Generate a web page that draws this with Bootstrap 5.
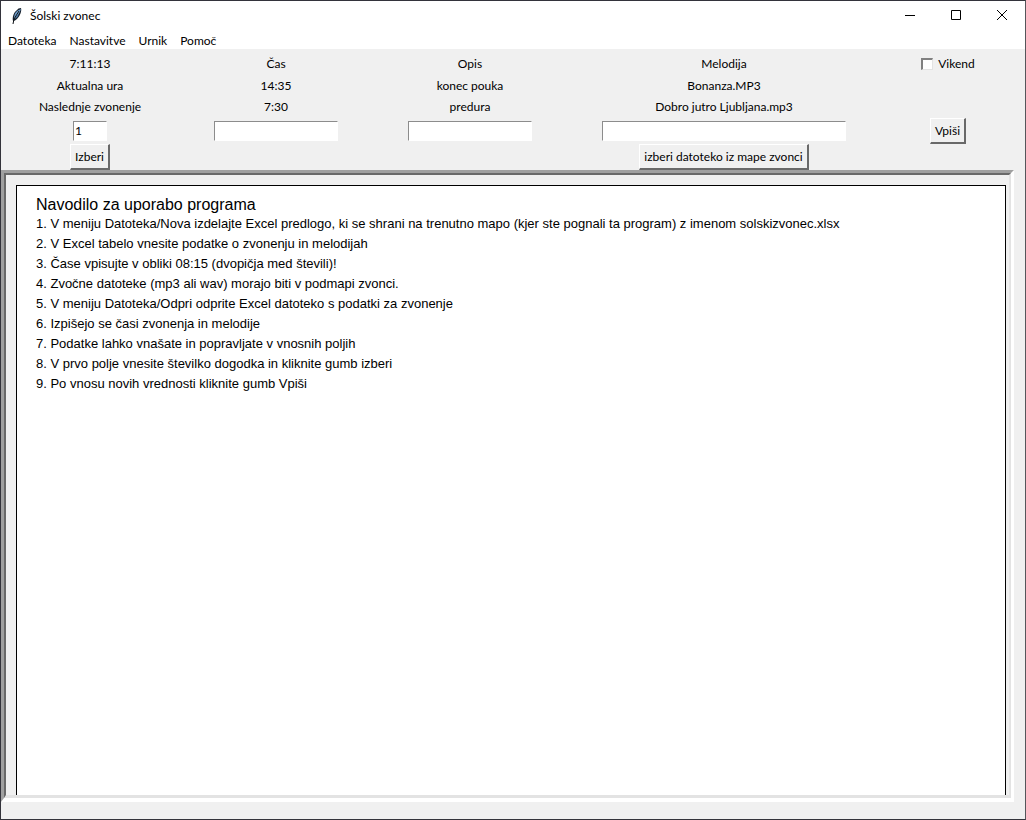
<!DOCTYPE html>
<html lang="sl">
<head>
<meta charset="utf-8">
<meta name="viewport" content="width=device-width, initial-scale=1">
<title>Šolski zvonec</title>
<link href="https://cdn.jsdelivr.net/npm/bootstrap@5.3.0/dist/css/bootstrap.min.css" rel="stylesheet">
<style>
  body { font: 12px/16px Lato, "Noto Sans", sans-serif; color: #000; background: #f0f0f0; }
  .app-window { border: 1px solid #33333b; border-right-color: #56565a; }
  .title-bar { height: 30px; }
  .app-name { padding-left: 7px; }
  .caption-btn { width: 46px; height: 29px; padding: 0; border: 0; background: none; display: flex; align-items: center; justify-content: center; }
  .menu-bar { height: 18px; gap: 13px; padding: 2px 0 0 7px; }
  .menu-bar a { color: #000; text-decoration: none; }
  .bell-form { display: grid; grid-template-columns: 178fr 194fr 194fr 314fr 134fr; grid-template-rows: 28px 18px 23px 26px 26px; justify-items: center; align-items: center; padding-right: 10px; }
  .bell-form > .head-cell { padding-top: 2px; }
  .col-1st { grid-column: 1; }
  .col-4th { grid-column: 4; }
  .field { height: 20px; padding: 0 1px 2px; border: 1px solid #fff; border-top-color: #8c8c8c; border-left-color: #8c8c8c; border-radius: 0; background: #fff; width: 124px; outline: 0; }
  .field-num { width: 34px; }
  .field-wide { width: 244px; }
  .raised { height: 26px; padding: 0 4px; border: 1px solid #fff; border-right: 2px solid #696969; border-bottom: 2px solid #696969; background: #f0f0f0; color: #000; white-space: nowrap; }
  .tick { appearance: none; width: 12px; height: 12px; margin: 0 1px 0 0; background: #fff; border: 1px solid #e3e3e3; border-top: 2px solid #808080; border-left: 2px solid #808080; }
  .sunken { border: solid; border-width: 3px 3px 4px 3px; border-color: #a0a0a0 #fff #fff #a0a0a0; margin: 0 11px 17px 0; }
  .sunken-inner { border: solid; border-width: 2px 2px 3px 2px; border-color: #696969 #e3e3e3 #e3e3e3 #696969; padding: 10px 3px 0 10px; }
  .sheet { background: #fff; border: 1px solid #000; border-bottom: 0; padding: 9px 19px; font-family: "Liberation Sans", Arial, sans-serif; font-size: 13px; line-height: 20px; }
  .sheet h1 { font-size: 16px; line-height: 19px; font-weight: 400; margin: 0; }
  .sheet ol { padding: 0; margin: 0; }
</style>
<script src="https://cdn.jsdelivr.net/npm/bootstrap@5.3.0/dist/js/bootstrap.bundle.min.js"></script>
</head>
<body>
<div class="app-window min-vh-100 d-flex flex-column">
  <header class="bg-white">
    <div class="title-bar d-flex align-items-center">
      <svg class="ms-2" width="14" height="18" viewBox="0 0 14 18" aria-hidden="true">
        <path d="M4 14C3 10 5 5 8 3Q9 1 12 1C13 4 11 9 8 12Q6 14 4 14Z" fill="#16202c"/>
        <path d="M5 12C5 7 7 4 10 3L12 2Q10 8 5 12Z" fill="#6f9cc8"/>
        <path d="M6 12Q9 10 10 7L7 9Z" fill="#4a7aab"/>
        <path d="M4 17L5 12L10 4" fill="none" stroke="#101418"/>
      </svg>
      <span class="app-name me-auto">Šolski zvonec</span>
      <button class="caption-btn" aria-label="Minimiraj"><svg width="12" height="12"><path d="M1 5.500H11" stroke="#000"/></svg></button>
      <button class="caption-btn" aria-label="Povečaj"><svg width="12" height="12"><path d="M1.500 .5H10.500V9.500H1.500Z" fill="none" stroke="#000"/></svg></button>
      <button class="caption-btn" aria-label="Zapri"><svg width="12" height="12"><path d="M1 0L11 10M11 0L1 10" stroke="#000"/></svg></button>
    </div>
    <nav class="menu-bar d-flex align-items-center">
      <a href="#">Datoteka</a><a href="#">Nastavitve</a><a href="#">Urnik</a><a href="#">Pomoč</a>
    </nav>
  </header>

  <form class="bell-form">
    <span class="head-cell">7:11:13</span>
    <label class="head-cell" for="time">Čas</label>
    <label class="head-cell" for="desc">Opis</label>
    <label class="head-cell" for="tune">Melodija</label>
    <label class="head-cell d-flex align-items-center gap-1"><input class="tick" type="checkbox"><span>Vikend</span></label>

    <span class="col-1st">Aktualna ura</span><span>14:35</span><span>konec pouka</span><span>Bonanza.MP3</span>

    <label class="col-1st" for="num">Naslednje zvonenje</label><span>7:30</span><span>predura</span><span>Dobro jutro Ljubljana.mp3</span>

    <input class="field field-num col-1st" id="num" type="text" value="1">
    <input class="field" id="time" type="text">
    <input class="field" id="desc" type="text">
    <input class="field field-wide" id="tune" type="text">
    <button class="raised" type="button">Vpiši</button>

    <button class="raised col-1st" type="button">Izberi</button>
    <button class="raised col-4th" type="button">izberi datoteko iz mape zvonci</button>
  </form>

  <main class="sunken flex-grow-1 d-flex">
    <div class="sunken-inner flex-grow-1 d-flex">
      <section class="sheet flex-grow-1">
        <h1>Navodilo za uporabo programa</h1>
        <ol class="list-unstyled">
          <li>1. V meniju Datoteka/Nova izdelajte Excel predlogo, ki se shrani na trenutno mapo (kjer ste pognali ta program) z imenom solskizvonec.xlsx</li>
          <li>2. V Excel tabelo vnesite podatke o zvonenju in melodijah</li>
          <li>3. Čase vpisujte v obliki 08:15 (dvopičja med števili)!</li>
          <li>4. Zvočne datoteke (mp3 ali wav) morajo biti v podmapi zvonci.</li>
          <li>5. V meniju Datoteka/Odpri odprite Excel datoteko s podatki za zvonenje</li>
          <li>6. Izpišejo se časi zvonenja in melodije</li>
          <li>7. Podatke lahko vnašate in popravljate v vnosnih poljih</li>
          <li>8. V prvo polje vnesite številko dogodka in kliknite gumb izberi</li>
          <li>9. Po vnosu novih vrednosti kliknite gumb Vpiši</li>
        </ol>
      </section>
    </div>
  </main>
</div>
</body>
</html>
